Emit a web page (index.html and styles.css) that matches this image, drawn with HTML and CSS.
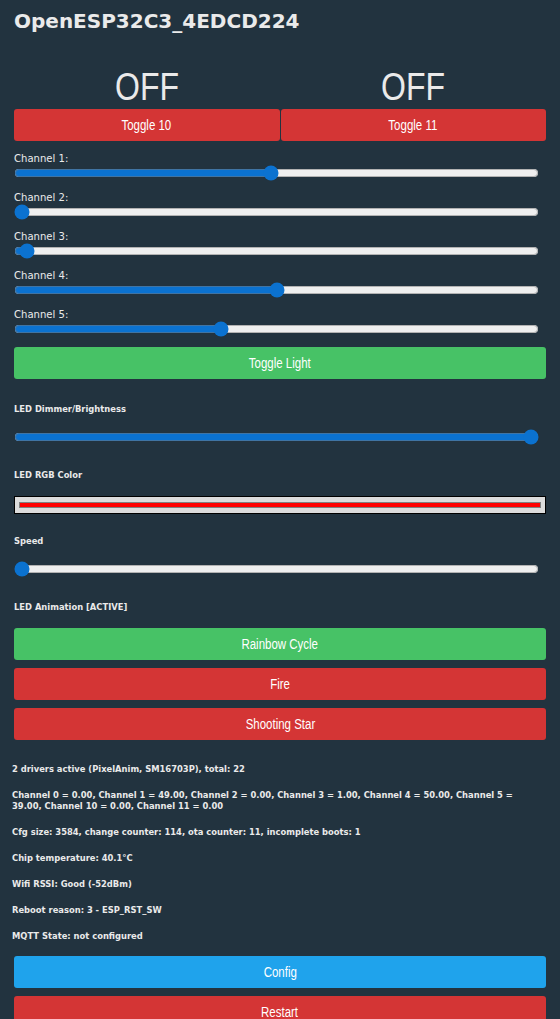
FILE: index.html
```html
<!DOCTYPE html>
<html lang="en">
<head>
    <meta charset="UTF-8">
    <meta name="viewport" content="width=device-width, initial-scale=1.0">
    <title>OpenESP32C3_4EDCD224</title>
    <link rel="stylesheet" href="styles.css">
</head>
<body>

<div class="main">
    <h3 class="title">OpenESP32C3_4EDCD224</h3>

    <!-- relay states -->
    <div class="relays">
        <div class="relay">
            <div class="state"><span>OFF</span></div>
            <button class="bred"><span>Toggle 10</span></button>
        </div>
        <div class="relay">
            <div class="state"><span>OFF</span></div>
            <button class="bred"><span>Toggle 11</span></button>
        </div>
    </div>

    <!-- pwm channels -->
    <div class="channels">
        <div class="chan">
            <label>Channel 1:</label>
            <input type="range" min="0" max="100" value="49">
        </div>
        <div class="chan">
            <label>Channel 2:</label>
            <input type="range" min="0" max="100" value="0">
        </div>
        <div class="chan">
            <label>Channel 3:</label>
            <input type="range" min="0" max="100" value="1">
        </div>
        <div class="chan">
            <label>Channel 4:</label>
            <input type="range" min="0" max="100" value="50">
        </div>
        <div class="chan">
            <label>Channel 5:</label>
            <input type="range" min="0" max="100" value="39">
        </div>
    </div>

    <button class="bgrn"><span>Toggle Light</span></button>

    <div class="ctl">
        <h5>LED Dimmer/Brightness</h5>
        <input type="range" min="0" max="100" value="100">
    </div>

    <div class="ctl">
        <h5>LED RGB Color</h5>
        <input type="color" value="#ff0000">
    </div>

    <div class="ctl speed">
        <h5>Speed</h5>
        <input type="range" min="0" max="100" value="0">
    </div>

    <div class="ctl">
        <h5>LED Animation [ACTIVE]</h5>
        <div class="anims">
            <button class="bgrn"><span>Rainbow Cycle</span></button>
            <button class="bred"><span>Fire</span></button>
            <button class="bred"><span>Shooting Star</span></button>
        </div>
    </div>

    <!-- status info -->
    <div class="info">
        <p>2 drivers active (PixelAnim, SM16703P), total: 22</p>
        <p>Channel 0 = 0.00, Channel 1 = 49.00, Channel 2 = 0.00, Channel 3 = 1.00, Channel 4 = 50.00, Channel 5 = 39.00, Channel 10 = 0.00, Channel 11 = 0.00</p>
        <p>Cfg size: 3584, change counter: 114, ota counter: 11, incomplete boots: 1</p>
        <p>Chip temperature: 40.1°C</p>
        <p>Wifi RSSI: Good (-52dBm)</p>
        <p>Reboot reason: 3 - ESP_RST_SW</p>
        <p>MQTT State: not configured</p>
    </div>

    <div class="menu">
        <button><span>Config</span></button>
        <button class="bred"><span>Restart</span></button>
    </div>
</div>

</body>
</html>
```

FILE: styles.css
```css
body {
    font-family: "DejaVu Sans Condensed", "DejaVu Sans", sans-serif;
    background-color: #22333f;
    color: #eaeaea;
    margin: 0;
}

.main {
    padding: 0 14px;
}

.title {
    font-family: "DejaVu Sans", sans-serif;
    font-size: 20px;
    font-weight: bold;
    margin: 0;
    padding-top: 9px;
    line-height: 24px;
}

button {
    display: block;
    width: 100%;
    height: 32px;
    padding: 0;
    border: none;
    border-radius: 3px;
    background-color: #1fa3ec;
    color: #fff;
    font-family: "Liberation Sans", Arial, sans-serif;
    font-size: 14px;
    cursor: pointer;
}

/* narrow arial look */
button span,
.state span {
    display: inline-block;
    transform: scaleX(0.82);
}

.bred {
    background-color: #d43535;
}

.bgrn {
    background-color: #47c266;
}

.relays {
    display: grid;
    grid-template-columns: 1fr 1fr;
    gap: 1px;
    margin-top: 32px;
}

.state {
    font-family: "Liberation Sans", Arial, sans-serif;
    font-size: 39px;
    line-height: 44px;
    text-align: center;
}

.channels {
    margin-top: 11px;
}

.chan label {
    display: block;
    font-size: 11.2px;
    line-height: 13px;
}

input[type="range"] {
    display: block;
    width: 525px;
    height: 16px;
    margin: 0 0 10px 0;
    accent-color: #0b72d0;
}

.ctl {
    margin-top: 24px;
}

.ctl h5 {
    font-size: 9.3px;
    line-height: 12px;
    margin: 0 0 14px 0;
}

.ctl input[type="range"] {
    margin: 0;
}

input[type="color"] {
    display: block;
    width: 100%;
    height: 18px;
    padding: 0;
    border: 1px solid #000;
    background-color: #dcdcdc;
    margin-top: 15px;
}

input[type="color"]::-webkit-color-swatch-wrapper {
    padding: 5px 4px 5px 4px;
}

input[type="color"]::-webkit-color-swatch {
    border: 1px solid #808080;
}

.speed {
    margin-top: 21px;
}

.anims {
    display: flex;
    flex-direction: column;
    gap: 8px;
    margin-top: 15px;
}

.info {
    margin: 23px 0 0 -2px;
    padding-right: 14px;
}

.info p {
    font-size: 9.3px;
    font-weight: bold;
    line-height: 11px;
    margin: 0 0 15px 0;
}

.menu {
    display: flex;
    flex-direction: column;
    gap: 8px;
}
```
